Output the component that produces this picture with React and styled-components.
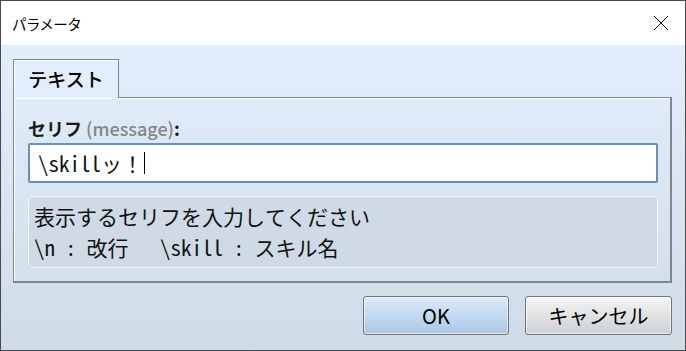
import React from 'react'
import styled, { createGlobalStyle } from 'styled-components'

const GlobalStyle = createGlobalStyle`
  html, body {
    margin: 0;
    padding: 0;
    background: #ffffff;
  }
  body {
    font-family: "Noto Sans CJK JP", "Noto Sans", sans-serif;
  }
`;

const Window = styled.div`
  width: 686px;
  height: 351px;
  box-sizing: border-box;
  border: 1px solid #4a4a4a;
  display: flex;
  flex-direction: column;
  overflow: hidden;
`;

const TitleBar = styled.div`
  height: 44px;
  flex: none;
  background: #ffffff;
  display: flex;
  align-items: center;
  justify-content: space-between;
  padding: 0 16px 0 11px;
`;

const Title = styled.span`
  font-size: 14.5px;
  letter-spacing: -0.6px;
  color: #000;
`;

const CloseButton = styled.button`
  border: none;
  background: transparent;
  padding: 0;
  width: 16px;
  height: 16px;
  display: flex;
`;

const Body = styled.div`
  flex: 1;
  display: flex;
  flex-direction: column;
  padding: 14px 13px 0 12px;
  background: linear-gradient(to bottom, #e2eefb, #cfdbe7);
`;

const TabStrip = styled.div`
  display: flex;
`;

const Tab = styled.div`
  width: 106px;
  height: 39px;
  box-sizing: border-box;
  border: 1px solid #80868c;
  border-bottom: none;
  box-shadow: inset 1px 1px 0 #ffffff;
  background: #e2eefb;
  margin-bottom: -1px;
  position: relative;
  z-index: 1;
  display: flex;
  align-items: center;
  justify-content: center;
  padding-bottom: 2px;
  font-size: 19px;
  font-weight: 500;
  color: #000;
`;

const Panel = styled.div`
  height: 186px;
  box-sizing: border-box;
  border: 1px solid #80868c;
  border-right-width: 2px;
  border-bottom-width: 2px;
  box-shadow: inset 1px 1px 0 #ffffff;
  padding: 17px 12px 0 14px;
  display: flex;
  flex-direction: column;
`;

const FieldLabel = styled.div`
  font-size: 18px;
  line-height: 26px;
  color: #1a1a1a;
  font-weight: 700;
`;

const Hint = styled.span`
  color: #858585;
  font-weight: 500;
`;

const TextInput = styled.div`
  margin-top: 2px;
  height: 40px;
  box-sizing: border-box;
  border: 2px solid #6b8fb8;
  border-radius: 2px;
  background: #ffffff;
  padding: 0 8px;
  display: flex;
  align-items: center;
  font-family: "Noto Sans Mono CJK JP", "DejaVu Sans Mono", monospace;
  font-size: 21px;
  color: #111;
`;

const Caret = styled.span`
  display: inline-block;
  width: 1px;
  height: 22px;
  background: #000;
  margin-left: 1px;
`;

const InfoBox = styled.div`
  margin-top: 13px;
  height: 72px;
  box-sizing: border-box;
  border: 1px solid #f3f7fb;
  border-radius: 5px;
  background: #cfdae6;
  padding: 4px 5px;
  font-family: "Noto Sans Mono CJK JP", "DejaVu Sans Mono", monospace;
  font-size: 21px;
  line-height: 31px;
  color: #111;
  white-space: pre;
`;

const ButtonRow = styled.div`
  display: flex;
  justify-content: flex-end;
  gap: 16px;
  margin-top: 13px;
`;

const Button = styled.button`
  width: ${p => p.$w}px;
  height: 39px;
  box-sizing: border-box;
  border: 1px solid #737373;
  border-radius: 3px;
  box-shadow: inset 0 0 0 1px rgba(255, 255, 255, 0.6);
  background: ${p => p.$primary
    ? 'linear-gradient(to bottom, #dcebfa, #a9c7e6)'
    : 'linear-gradient(to bottom, #f4f4f4, #cdd1d4)'};
  font-family: "Noto Sans CJK JP", "Noto Sans", sans-serif;
  font-size: 20px;
  font-weight: 400;
  color: #000;
  padding: 0;
`;

export default function App() {
  return (
    <>
      <GlobalStyle />
      <Window>
        <TitleBar>
          <Title>パラメータ</Title>
          <CloseButton aria-label="閉じる">
            <svg width="16" height="16" viewBox="0 0 16 16">
              <path d="M1 1L15 15M15 1L1 15" stroke="#000" strokeWidth="1" fill="none" />
            </svg>
          </CloseButton>
        </TitleBar>
        <Body>
          <TabStrip>
            <Tab>テキスト</Tab>
          </TabStrip>
          <Panel>
            <FieldLabel>
              セリフ <Hint>(message)</Hint>:
            </FieldLabel>
            <TextInput>
              {'\\skillッ！'}
              <Caret />
            </TextInput>
            <InfoBox>
              {'表示するセリフを入力してください\n\\n : 改行   \\skill : スキル名'}
            </InfoBox>
          </Panel>
          <ButtonRow>
            <Button $primary $w={146}>OK</Button>
            <Button $w={147}>キャンセル</Button>
          </ButtonRow>
        </Body>
      </Window>
    </>
  )
}
